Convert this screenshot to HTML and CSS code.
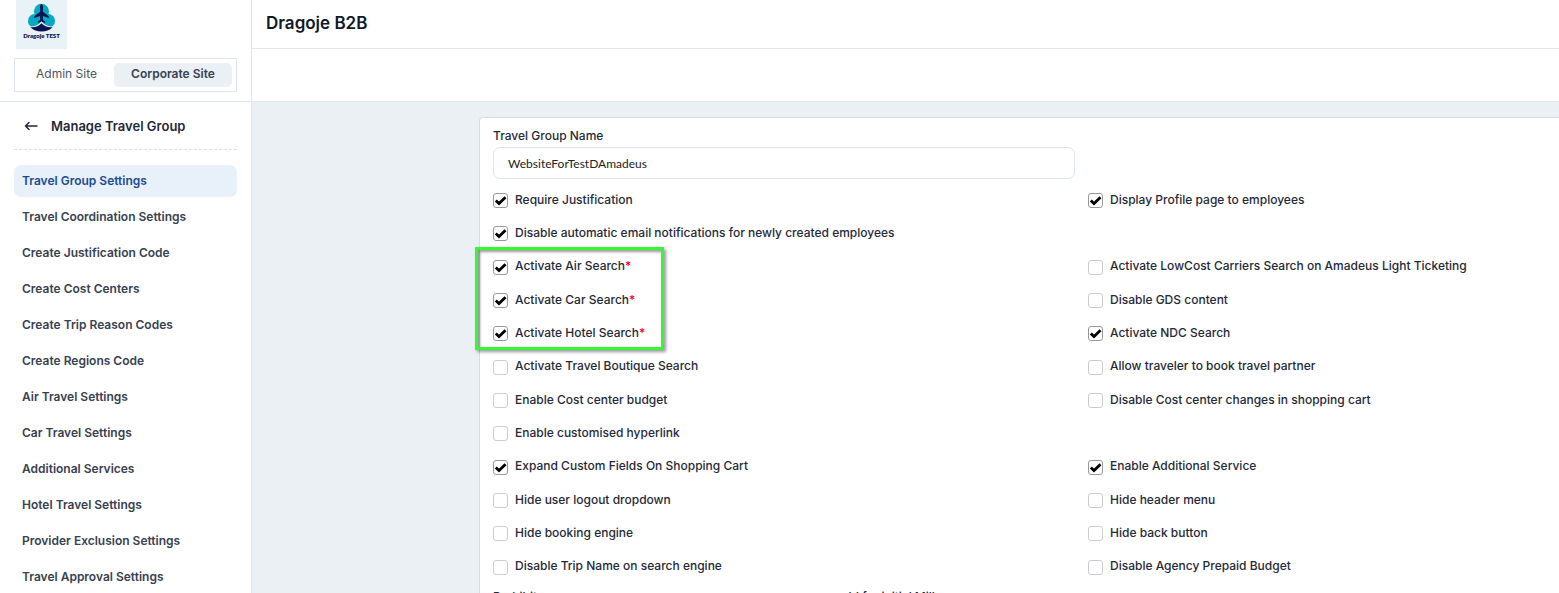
FILE: index.html
```html
<!DOCTYPE html>
<html lang="en">
<head>
<meta charset="utf-8">
<title>Dragoje B2B</title>
<link rel="stylesheet" href="styles.css">
</head>
<body>
<div class="app">
  <aside class="sidebar">
    <div class="brand">
      <div class="logo">
        <svg class="logo-mark" viewBox="0 0 30 30" aria-hidden="true">
          <g fill="#05a9c3"><circle cx="15" cy="8.500" r="7.800"/><circle cx="8" cy="18.500" r="7"/><circle cx="22" cy="18.500" r="7"/></g>
          <path fill="#0b1350" d="M15 1c1 0 1.500 1.500 1.500 3v5l6 4.800v1.700l-6-2v4l2.200 1.700v1.300L15 19.700l-3.700.8v-1.300l2.200-1.700v-4l-6 2v-1.700l6-4.800V4c0-1.500.5-3 1.500-3z"/>
          <path fill="#e9f2f6" d="M2 24c5.500 1 9.500-.5 13-5 3.500 4.500 7.500 6 13 5v6H2z"/>
          <path fill="#0b1350" d="M3.500 25c5 .5 8.500-1 11.500-4 3 3 6.500 4.500 11.500 4-3 3-7 4.500-11.500 4.500S6.500 28 3.500 25z"/>
        </svg>
        <span class="logo-name">Dragoje TEST</span>
      </div>
      <div class="site-switch">
        <button type="button" class="site">Admin Site</button>
        <button type="button" class="site site-active">Corporate Site</button>
      </div>
    </div>
    <div class="menu">
      <div class="menu-head">
        <button type="button" class="back" aria-label="Back">
          <svg viewBox="0 0 14 12" width="14" height="12" fill="none" stroke="#1f2937" stroke-width="1.500" stroke-linecap="round" stroke-linejoin="round"><path d="M5 2.500L1.500 6 5 9.500M1.500 6H13"/></svg>
        </button>
        <h2 class="menu-title">Manage Travel Group</h2>
      </div>
      <nav class="nav">
        <a class="nav-link nav-active" href="#">Travel Group Settings</a>
        <a class="nav-link" href="#">Travel Coordination Settings</a>
        <a class="nav-link" href="#">Create Justification Code</a>
        <a class="nav-link" href="#">Create Cost Centers</a>
        <a class="nav-link" href="#">Create Trip Reason Codes</a>
        <a class="nav-link" href="#">Create Regions Code</a>
        <a class="nav-link" href="#">Air Travel Settings</a>
        <a class="nav-link" href="#">Car Travel Settings</a>
        <a class="nav-link" href="#">Additional Services</a>
        <a class="nav-link" href="#">Hotel Travel Settings</a>
        <a class="nav-link" href="#">Provider Exclusion Settings</a>
        <a class="nav-link" href="#">Travel Approval Settings</a>
      </nav>
    </div>
  </aside>
  <main class="main">
    <header class="topbar"><h1 class="title">Dragoje B2B</h1></header>
    <div class="subbar"></div>
    <div class="content">
      <form class="card">
        <label class="field-label" for="group-name">Travel Group Name</label>
        <input class="field" id="group-name" type="text" value="WebsiteForTestDAmadeus">
        <div class="options">
          <label class="option"><input type="checkbox" class="check" checked>Require Justification</label>
          <label class="option"><input type="checkbox" class="check" checked>Display Profile page to employees</label>
          <label class="option first"><input type="checkbox" class="check" checked>Disable automatic email notifications for newly created employees</label>
          <label class="option first"><input type="checkbox" class="check" checked><span>Activate Air Search<b class="required">*</b></span></label>
          <label class="option"><input type="checkbox" class="check">Activate LowCost Carriers Search on Amadeus Light Ticketing</label>
          <label class="option"><input type="checkbox" class="check" checked><span>Activate Car Search<b class="required">*</b></span></label>
          <label class="option"><input type="checkbox" class="check">Disable GDS content</label>
          <label class="option"><input type="checkbox" class="check" checked><span>Activate Hotel Search<b class="required">*</b></span></label>
          <label class="option"><input type="checkbox" class="check" checked>Activate NDC Search</label>
          <label class="option"><input type="checkbox" class="check">Activate Travel Boutique Search</label>
          <label class="option"><input type="checkbox" class="check">Allow traveler to book travel partner</label>
          <label class="option"><input type="checkbox" class="check">Enable Cost center budget</label>
          <label class="option"><input type="checkbox" class="check">Disable Cost center changes in shopping cart</label>
          <label class="option first"><input type="checkbox" class="check">Enable customised hyperlink</label>
          <label class="option first"><input type="checkbox" class="check" checked>Expand Custom Fields On Shopping Cart</label>
          <label class="option"><input type="checkbox" class="check" checked>Enable Additional Service</label>
          <label class="option"><input type="checkbox" class="check">Hide user logout dropdown</label>
          <label class="option"><input type="checkbox" class="check">Hide header menu</label>
          <label class="option"><input type="checkbox" class="check">Hide booking engine</label>
          <label class="option"><input type="checkbox" class="check">Hide back button</label>
          <label class="option"><input type="checkbox" class="check">Disable Trip Name on search engine</label>
          <label class="option"><input type="checkbox" class="check">Disable Agency Prepaid Budget</label>
          <div class="highlight"></div>
        </div>
        <p class="note">Prohibit users on same group or company on a season as would for initial Mill</p>
      </form>
    </div>
  </main>
</div>
</body>
</html>
```
FILE: styles.css
```css
* { box-sizing: border-box; }
body {
  margin: 0;
  height: 100vh;
  overflow: hidden;
  background: #fff;
  color: #1f2937;
  font: 500 12px/16px Inter, "Liberation Sans", sans-serif;
}
button { border: 0; padding: 0; background: none; font: inherit; color: inherit; }
.app { display: flex; min-height: 100vh; }
.sidebar { flex: 0 0 252px; border-right: 1px solid #dfe6ee; }
.brand { height: 102px; padding: 0 14px; border-bottom: 1px solid #dfe6ee; }
.logo {
  width: 51px;
  height: 49px;
  margin-left: 2px;
  padding-top: 3px;
  background: #e9f2f6;
  display: flex;
  flex-direction: column;
  align-items: center;
}
.logo-mark { width: 29px; height: 29px; }
.logo-name { font: 800 6px/8px Lato, sans-serif; color: #0b1350; white-space: nowrap; }
.site-switch {
  display: grid;
  grid-template-columns: 1fr 118px;
  height: 34px;
  margin-top: 9px;
  padding: 4px;
  border: 1px solid #dfe5f0;
}
.site { height: 24px; border-radius: 5px; padding-bottom: 2px; color: #4b5563; font-weight: 400; }
.site-active { background: #ebf0f5; color: #374151; font-weight: 600; }
.menu { padding: 0 14px; }
.menu-head {
  display: flex;
  align-items: center;
  gap: 13px;
  height: 48px;
  padding-left: 10px;
  border-bottom: 1px dashed #dfe0e3;
}
.back { display: flex; }
.menu-title { margin: 0; font-size: 13px; line-height: 20px; font-weight: 600; }
.nav { display: flex; flex-direction: column; gap: 4px; padding-top: 15px; }
.nav-link {
  height: 32px;
  padding: 0 8px;
  border-radius: 7px;
  line-height: 32px;
  font-weight: 600;
  color: #374151;
  text-decoration: none;
}
.nav-active { background: #e8f1f9; color: #1c4b93; }
.main { flex: 1; min-width: 0; display: flex; flex-direction: column; background: #ebf0f5; }
.topbar { flex: none; height: 49px; padding: 11px 14px; background: #fff; border-bottom: 1px solid #dfe6ee; }
.title { margin: 0; font-size: 17px; line-height: 24px; font-weight: 600; color: #111827; }
.subbar { flex: none; height: 53px; background: #fff; border-bottom: 1px solid #dfe6ee; }
.content { flex: 1; padding: 15px 0 0 227px; }
.card {
  padding: 10px 0 20px 13px;
  background: #fff;
  border: 1px solid #d9dce0;
  border-right: 0;
  border-radius: 4px 0 0 4px;
}
.field-label { display: block; }
.field {
  display: block;
  width: calc(100% / 2 + 49px);
  height: 32px;
  margin: 3px 0 4px;
  padding: 0 14px;
  border: 1px solid #dfe5f0;
  border-radius: 7px;
  background: #fff;
  color: #222;
  font: 400 12px/16px Lato, sans-serif;
}
.options {
  position: relative;
  display: grid;
  grid-template-columns: 595px 1fr;
  grid-template-rows: repeat(12, 1fr);
  min-height: 400px;
}
.option { display: flex; align-items: center; gap: 7px; }
.first { grid-column: 1; }
.check {
  appearance: none;
  width: 15px;
  height: 15px;
  margin: 2px 0 0;
  border: 1px solid #cbcbcf;
  border-radius: 3px;
  background: #fff;
}
.check:checked {
  border-color: #999;
  background: url("data:image/svg+xml,%3Csvg xmlns='http://www.w3.org/2000/svg' viewBox='0 0 13 13'%3E%3Cpath d='M1.800 6.500L5 9.500L11.500 3.300' fill='none' stroke='%23000' stroke-width='2.800'/%3E%3C/svg%3E") center / 13px no-repeat;
}
.required { color: #f00; font-weight: 500; }
.note { margin: 6px 0 0; }
.highlight {
  position: absolute;
  left: -18px;
  top: 64px;
  width: 189px;
  height: 103px;
  border: 3px solid #33f833;
  box-shadow: 2px 2px 3px #0006, inset 2px 2px 3px #0006;
  pointer-events: none;
}
```
